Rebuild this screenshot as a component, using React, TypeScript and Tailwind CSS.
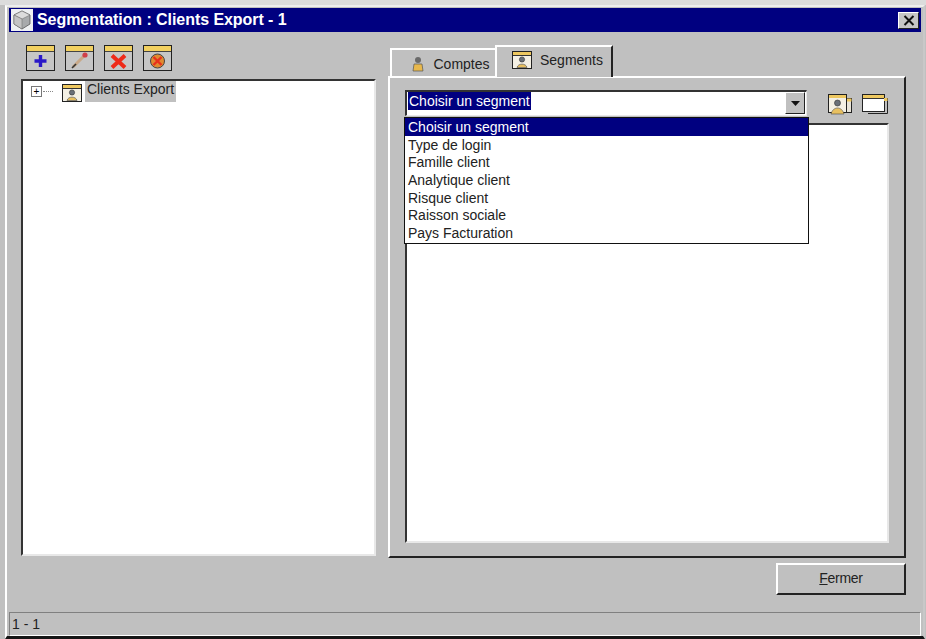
const segments = [
  "Choisir un segment",
  "Type de login",
  "Famille client",
  "Analytique client",
  "Risque client",
  "Raisson sociale",
  "Pays Facturation",
];

function ToolIcon({ children }: { children: React.ReactNode }) {
  return (
    <button type="button" className="block">
      <svg width="29" height="26" viewBox="0 0 29 26" aria-hidden="true" className="block">
        <rect x="0.5" y="0.5" width="28" height="25" fill="#c6c6c6" stroke="#222" />
        <rect x="1" y="1" width="27" height="5" fill="#f2d060" />
        <line x1="1" y1="6.5" x2="28" y2="6.5" stroke="#444" />
        {children}
      </svg>
    </button>
  );
}

function SegmentIcon() {
  return (
    <svg width="20" height="18" viewBox="0 0 20 18" aria-hidden="true" className="block">
      <rect x="0.5" y="0.5" width="19" height="17" fill="#f4f0e4" stroke="#222" />
      <rect x="1" y="1" width="18" height="3" fill="#eec860" />
      <line x1="1" y1="4.5" x2="19" y2="4.5" stroke="#333" />
      <circle cx="10" cy="8.5" r="2.6" fill="#6a7078" stroke="#333" strokeWidth="0.6" />
      <path d="M5 16.5 C6 12 14 12 15 16.5 Z" fill="#e8c060" stroke="#444" strokeWidth="0.6" />
    </svg>
  );
}

export default function App() {
  return (
    <div className="h-[639px] w-[926px] overflow-hidden border-t-[5px] border-t-[#dcdcdc] bg-[#c0c0c0] pl-[5px] pr-[1px] font-['Liberation_Sans',sans-serif] text-[14px] leading-none text-[#222]">
      <div className="flex h-[634px] flex-col border-b-[3px] border-l-2 border-r-2 border-t-2 border-b-[#151515] border-l-white border-r-[#c8c8c8] border-t-[#eeeeee] px-[2px] pt-[1px]">
        {/* Title bar */}
        <div className="flex h-[24px] shrink-0 items-center bg-[#000080] pl-[2px] pr-[2px] text-white">
          <svg width="22" height="22" viewBox="0 0 22 22" aria-hidden="true" className="shrink-0">
            <rect width="22" height="22" fill="#eef0f2" />
            <path d="M11 2 L19 6 V15 L11 20 L3 15 V6 Z" fill="#a8aaac" stroke="#555" strokeWidth="0.8" />
            <path d="M11 2 L19 6 L11 10 L3 6 Z" fill="#dcdcdc" stroke="#666" strokeWidth="0.5" />
            <path d="M11 10 V20 L3 15 V6 Z" fill="#c4c4c4" stroke="#666" strokeWidth="0.5" />
          </svg>
          <span className="ml-[4px] text-[16px] font-bold tracking-[-0.06px]">Segmentation : Clients Export - 1</span>
          <button
            type="button"
            aria-label="Fermer"
            className="ml-auto flex h-[17px] w-[21px] items-center justify-center border-b border-l border-r border-t border-b-[#222] border-l-white border-r-[#222] border-t-white bg-[#c6c6c6]"
          >
            <svg width="12" height="11" viewBox="0 0 12 11" aria-hidden="true">
              <path d="M1.5 1 L10.5 10 M10.5 1 L1.5 10" stroke="#111" strokeWidth="2" />
            </svg>
          </button>
        </div>

        {/* Main area */}
        <div className="flex min-h-0 flex-1 flex-col">
          <div className="flex h-[526px] shrink-0">
            {/* Left column */}
            <div className="ml-[12px] flex w-[355px] shrink-0 flex-col">
              <div className="mb-[8px] ml-[5px] mt-[13px] flex gap-[10px]">
                <ToolIcon>
                  <path d="M14.5 10 V22 M8.5 16 H20.5" stroke="#2a18c8" strokeWidth="3.4" />
                </ToolIcon>
                <ToolIcon>
                  <path d="M8 22 L19 11" stroke="#c8a888" strokeWidth="3" />
                  <path d="M7 23 L11 19" stroke="#333" strokeWidth="1.6" />
                  <circle cx="20" cy="10" r="2.6" fill="#d04048" />
                </ToolIcon>
                <ToolIcon>
                  <path d="M8 10.5 L21 22.5 M21 10.5 L8 22.5" stroke="#ee2a18" strokeWidth="4" />
                </ToolIcon>
                <ToolIcon>
                  <circle cx="14.5" cy="16" r="7" fill="#e08a30" stroke="#444" />
                  <path d="M10.5 12 L18.5 20 M18.5 12 L10.5 20" stroke="#e8301c" strokeWidth="2.4" />
                </ToolIcon>
              </div>
              <div className="h-[477px] border-b-2 border-l-2 border-r-2 border-t-2 border-b-[#e8e8e8] border-l-[#333] border-r-[#e8e8e8] border-t-[#333] bg-white">
                <div className="flex h-[21px] items-center">
                  <span className="ml-[8px] flex h-[11px] w-[11px] items-center justify-center border border-[#777] bg-white text-[10px] leading-none text-black">+</span>
                  <span className="ml-[1px] w-[10px] border-t border-dotted border-[#888]" />
                  <span className="ml-[9px] mt-[3px]">
                    <SegmentIcon />
                  </span>
                  <span className="ml-[3px] flex h-[21px] w-[91px] items-center justify-center bg-[#c0c0c0] pb-[5px]">Clients Export</span>
                </div>
              </div>
            </div>

            {/* Right column */}
            <div className="ml-[12px] flex w-[518px] shrink-0 flex-col">
              <div className="ml-[2px] mt-[13px] flex h-[31px] items-end">
                <div className="flex h-[28px] w-[105px] items-center justify-center gap-[8px] border-l-2 border-t-2 border-l-white border-t-white bg-[#c0c0c0] pl-[14px] pt-[2px]">
                  <svg width="14" height="16" viewBox="0 0 14 16" aria-hidden="true">
                    <circle cx="7" cy="4" r="3" fill="#6a6a6a" />
                    <path d="M2 15 L3 8 H11 L12 15 Z" fill="#e8b84c" stroke="#555" strokeWidth="0.7" />
                  </svg>
                  Comptes
                </div>
                <div className="relative z-10 -mb-[1px] flex h-[32px] w-[118px] items-center justify-center gap-[8px] border-l-2 border-r-2 border-t-2 border-l-white border-r-[#222] border-t-white bg-[#c0c0c0] pb-[5px] pl-[7px]">
                  <SegmentIcon />
                  Segments
                </div>
              </div>
              <div className="relative h-[482px] border-b-2 border-l-2 border-r-2 border-t-2 border-b-[#222] border-l-white border-r-[#222] border-t-white px-[15px] pt-[12px]">
                <div className="flex items-start">
                  <div className="flex h-[26px] w-[402px] items-start border-b border-l-2 border-r border-t-2 border-b-[#e8e8e8] border-l-[#333] border-r-[#e8e8e8] border-t-[#333] bg-white pl-[1px] pr-[1px]">
                    <span className="bg-[#000080] px-[1px] py-[2px] text-white">Choisir un segment</span>
                    <span className="ml-auto flex h-[22px] w-[20px] items-center justify-center border-b border-l border-r border-t border-b-[#222] border-l-white border-r-[#222] border-t-white bg-[#c0c0c0]">
                      <svg width="9" height="5" viewBox="0 0 9 5" aria-hidden="true">
                        <path d="M0 0 H9 L4.5 5 Z" fill="#111" />
                      </svg>
                    </span>
                  </div>
                  <svg width="24" height="21" viewBox="0 0 24 21" aria-hidden="true" className="ml-[21px] mt-[4px] shrink-0">
                    <rect x="17.5" y="4.5" width="6" height="14" fill="#e8e4d8" stroke="#222" />
                    <rect x="17.5" y="4.5" width="6" height="3" fill="#eec860" />
                    <rect x="0.5" y="0.5" width="18" height="18" fill="#f4f0e4" stroke="#222" />
                    <rect x="1" y="1" width="17" height="3" fill="#eec860" />
                    <circle cx="9.5" cy="9" r="3" fill="#6a7078" stroke="#333" strokeWidth="0.6" />
                    <path d="M3 20 C5 12 14 12 16 20 Z" fill="#e8c060" stroke="#444" strokeWidth="0.6" />
                  </svg>
                  <svg width="26" height="21" viewBox="0 0 26 21" aria-hidden="true" className="ml-[10px] mt-[4px] shrink-0">
                    <path d="M6 19.5 H25.5 V4" fill="none" stroke="#222" />
                    <rect x="0.5" y="0.5" width="22" height="17" fill="#fff" stroke="#222" />
                    <rect x="1" y="1" width="21" height="3" fill="#eec860" />
                    <rect x="22" y="4" width="3.5" height="3" fill="#eec860" />
                    <line x1="1" y1="4.5" x2="22" y2="4.5" stroke="#333" />
                  </svg>
                </div>
                <div className="mt-[7px] h-[420px] w-[484px] border-b-2 border-l-2 border-r-2 border-t-2 border-b-[#e8e8e8] border-l-[#333] border-r-[#e8e8e8] border-t-[#333] bg-white" />

                {/* Open dropdown list */}
                <ul className="absolute left-[14px] top-[39px] z-20 w-[405px] border border-[#111] bg-white pb-[1px]">
                  {segments.map((label, index) => (
                    <li
                      key={label}
                      className={`flex h-[17.7px] items-center pl-[3px] ${index === 0 ? "bg-[#000080] text-white" : ""}`}
                    >
                      {label}
                    </li>
                  ))}
                </ul>
              </div>
            </div>
          </div>

          {/* Footer button */}
          <div className="flex justify-end pr-[15px] pt-[5px]">
            <button
              type="button"
              className="h-[32px] w-[130px] border-b-2 border-l-2 border-r-2 border-t-2 border-b-[#222] border-l-white border-r-[#222] border-t-white bg-[#c0c0c0] pb-[2px] tracking-[-0.3px]"
            >
              <span className="underline">F</span>ermer
            </button>
          </div>
        </div>

        {/* Status bar */}
        <div className="flex h-[24px] shrink-0 items-center border-b border-l border-r border-t border-b-white border-l-[#808080] border-r-white border-t-[#808080] pl-[2px]">
          1 - 1
        </div>
      </div>
    </div>
  );
}
